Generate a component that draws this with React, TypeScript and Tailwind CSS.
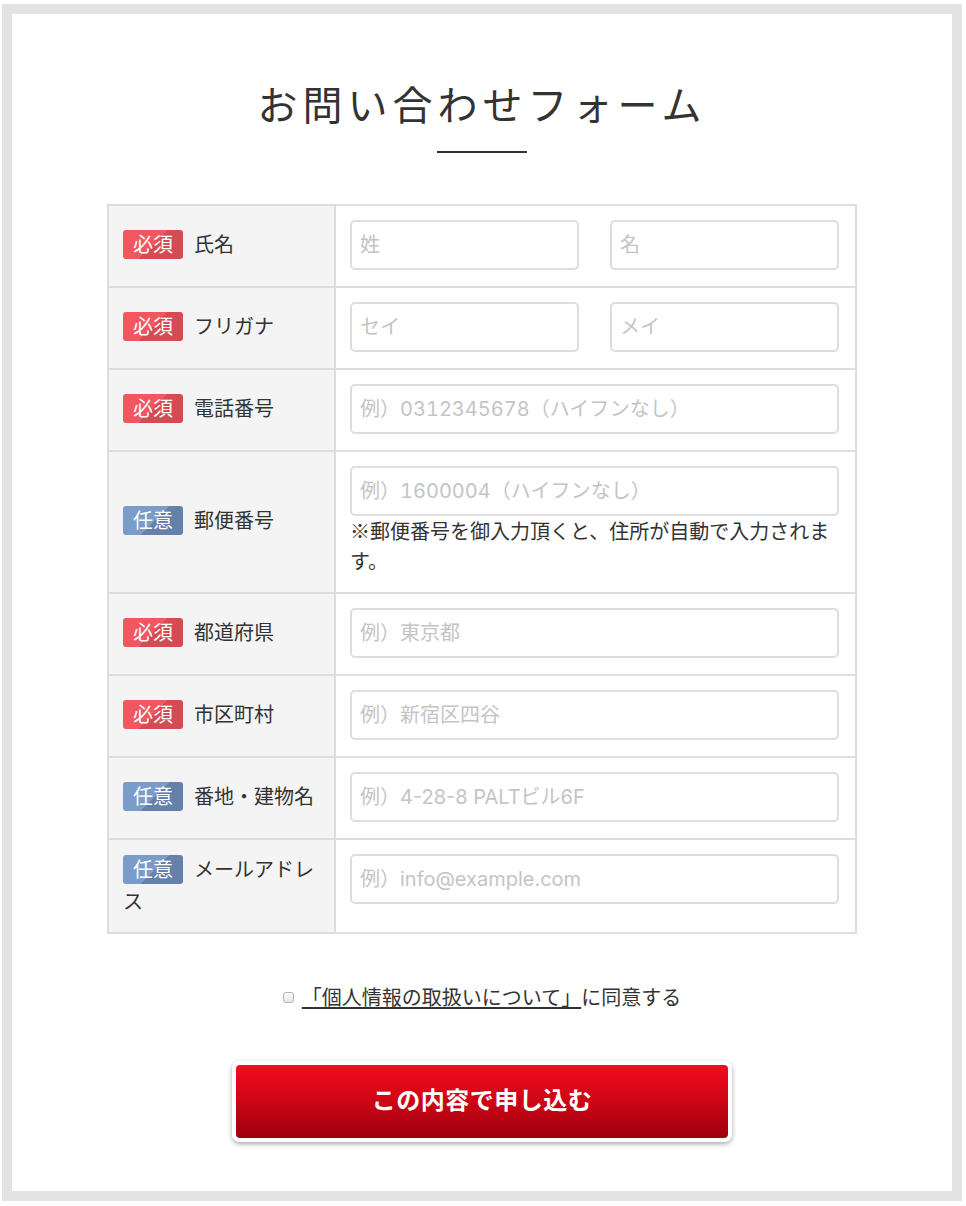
import React from "react";

type FieldRow = {
  required: boolean;
  label: string;
  content: React.ReactNode;
};

const TextField = ({
  placeholder,
  wideDigits = false,
}: {
  placeholder: string;
  wideDigits?: boolean;
}) => (
  <input
    type="text"
    placeholder={placeholder}
    className={`block h-[50px] w-full rounded-[5px] border-2 border-[#dddddd] bg-white px-[8px] font-['Inter','Noto_Sans_CJK_JP',sans-serif] text-[20px] text-[#333] outline-none placeholder:text-[#c4c4c4] ${
      wideDigits ? "tabular-nums" : ""
    }`}
  />
);

const Badge = ({ required }: { required: boolean }) => (
  <span
    className={`relative -top-[2px] mr-[11px] inline-block rounded-[3px] px-[10px] pb-[2px] align-middle text-[20px] leading-[27px] text-white ${
      required
        ? "bg-[linear-gradient(135deg,#f2575f_50%,#d44b53_50%)]"
        : "bg-[linear-gradient(135deg,#7b9cc9_52%,#6581ab_52%)]"
    }`}
  >
    {required ? "必須" : "任意"}
  </span>
);

const rows: FieldRow[] = [
  {
    required: true,
    label: "氏名",
    content: (
      <div className="flex gap-[31px]">
        <div className="flex-1">
          <TextField placeholder="姓" />
        </div>
        <div className="flex-1">
          <TextField placeholder="名" />
        </div>
      </div>
    ),
  },
  {
    required: true,
    label: "フリガナ",
    content: (
      <div className="flex gap-[31px]">
        <div className="flex-1">
          <TextField placeholder="セイ" />
        </div>
        <div className="flex-1">
          <TextField placeholder="メイ" />
        </div>
      </div>
    ),
  },
  {
    required: true,
    label: "電話番号",
    content: <TextField placeholder="例）0312345678（ハイフンなし）" wideDigits />,
  },
  {
    required: false,
    label: "郵便番号",
    content: (
      <>
        <TextField placeholder="例）1600004（ハイフンなし）" wideDigits />
        <p className="text-[20px] leading-[30px] text-[#333]">
          ※郵便番号を御入力頂くと、住所が自動で入力されます。
        </p>
      </>
    ),
  },
  {
    required: true,
    label: "都道府県",
    content: <TextField placeholder="例）東京都" />,
  },
  {
    required: true,
    label: "市区町村",
    content: <TextField placeholder="例）新宿区四谷" />,
  },
  {
    required: false,
    label: "番地・建物名",
    content: <TextField placeholder="例）4-28-8 PALTビル6F" />,
  },
  {
    required: false,
    label: "メールアドレス",
    content: <TextField placeholder="例）info@example.com" />,
  },
];

const App = () => {
  return (
    <div className="min-h-[1206px] bg-white pl-[2px] pt-[4px] font-['Noto_Sans_CJK_JP','Noto_Sans',sans-serif] text-[#333]">
      <div className="w-[960px] border-[10px] border-[#e3e3e3] bg-white pb-[49px]">
        {/* heading */}
        <div className="flex flex-col items-center pt-[61px]">
          <h1 className="text-[40px] font-normal leading-[56px] tracking-[5px] text-[#333]">
            お問い合わせフォーム
          </h1>
          <div className="mt-[20px] h-[2px] w-[90px] bg-[#333]" />
        </div>

        {/* form table */}
        <div className="mx-auto mt-[51px] w-[750px] border-x-2 border-t-2 border-[#dddddd]">
          {rows.map((row) => (
            <div key={row.label} className="flex border-b-2 border-[#dddddd]">
              <div className="flex w-[227px] shrink-0 items-center border-r-2 border-[#dddddd] bg-[#f4f4f4] pb-[16px] pl-[14px] pr-[12px] pt-[14px]">
                <p className="text-[20px] leading-[30px] text-[#333]">
                  <Badge required={row.required} />
                  {row.label}
                </p>
              </div>
              <div className="min-w-0 flex-1 pb-[16px] pl-[14px] pr-[16px] pt-[14px]">
                {row.content}
              </div>
            </div>
          ))}
        </div>

        {/* agreement */}
        <div className="mt-[48px] flex items-center justify-center text-[20px] leading-[30px]">
          <span className="mr-[8px] inline-block h-[11px] w-[11px] rounded-[3px] border border-[#b4b4b4] bg-[linear-gradient(to_bottom,#fbfbfb,#e6e6e6)]" />
          <a
            href="#"
            className="text-[#333] underline decoration-2 underline-offset-[2px]"
          >
            「個人情報の取扱いについて」
          </a>
          <span>に同意する</span>
        </div>

        {/* submit */}
        <div className="mt-[49px] flex justify-center">
          <button
            type="button"
            className="h-[81px] w-[500px] rounded-[8px] border-4 border-white bg-[linear-gradient(to_bottom,#f20c1f,#d00616_45%,#9e000d)] pb-[6px] text-[24px] font-bold tracking-[0.5px] text-white shadow-[0_2px_5px_rgba(0,0,0,0.35)]"
          >
            この内容で申し込む
          </button>
        </div>
      </div>
    </div>
  );
};

export default App;
